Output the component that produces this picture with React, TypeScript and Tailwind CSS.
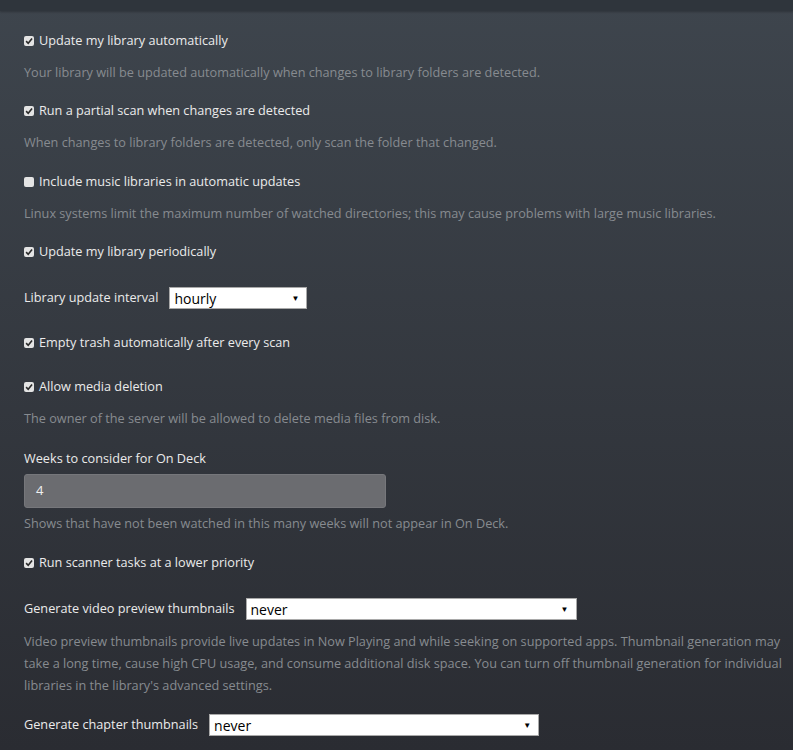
import React from 'react';

const Check = ({ checked }: { checked: boolean }) => (
  <span className="mr-[5px] inline-flex h-[10px] w-[10px] shrink-0 items-center justify-center rounded-[2px] bg-[#e4e4e4]">
    {checked && (
      <svg viewBox="0 0 10 10" className="h-[8px] w-[8px]">
        <path d="M1.4 5.2 L4 7.8 L8.8 2" fill="none" stroke="#2a2a2a" strokeWidth="2" />
      </svg>
    )}
  </span>
);

const CheckRow = ({ label, checked = true, className = '' }: { label: string; checked?: boolean; className?: string }) => (
  <div className={`flex h-[20px] items-center text-[12.7px] text-[#ebebeb] ${className}`}>
    <Check checked={checked} />
    <span>{label}</span>
  </div>
);

const Desc = ({ children, className = '' }: { children: React.ReactNode; className?: string }) => (
  <p className={`text-[12.7px] leading-[22px] text-[#878b90] ${className}`}>{children}</p>
);

const Select = ({ value, width }: { value: string; width: string }) => (
  <div className={`flex h-[22px] items-center justify-between border border-[#a9a9a9] bg-white pl-[4px] pr-[7px] text-[14px] text-black ${width}`}>
    <span>{value}</span>
    <span className="text-[8px] leading-none">▼</span>
  </div>
);

export default function App() {
  return (
    <div className="min-h-[750px] w-full bg-gradient-to-b from-[#3e454d] to-[#2a2c32] font-['Open_Sans',sans-serif]">
      <div className="h-[11px] bg-[#2f353c] shadow-[0_1px_2px_rgba(0,0,0,0.25)]" />
      <div className="pl-[24px] pr-[4px] pt-[20px]">
        <CheckRow label="Update my library automatically" />
        <Desc className="mt-[10px]">Your library will be updated automatically when changes to library folders are detected.</Desc>

        <CheckRow label="Run a partial scan when changes are detected" className="mt-[18px]" />
        <Desc className="mt-[10px]">When changes to library folders are detected, only scan the folder that changed.</Desc>

        <CheckRow label="Include music libraries in automatic updates" checked={false} className="mt-[19px]" />
        <Desc className="mt-[10px]">Linux systems limit the maximum number of watched directories; this may cause problems with large music libraries.</Desc>

        <CheckRow label="Update my library periodically" className="mt-[18px]" />

        <div className="mt-[25px] flex items-center text-[12.7px] text-[#ebebeb]">
          <span className="mr-[11px]">Library update interval</span>
          <Select value="hourly" width="w-[138px]" />
        </div>

        <CheckRow label="Empty trash automatically after every scan" className="mt-[24px]" />

        <CheckRow label="Allow media deletion" className="mt-[24px]" />
        <Desc className="mt-[10px]">The owner of the server will be allowed to delete media files from disk.</Desc>

        <div className="mt-[19px] h-[20px] text-[12.7px] leading-[20px] text-[#ebebeb]">Weeks to consider for On Deck</div>
        <div className="mt-[6px] flex h-[34px] w-[362px] items-center rounded-[3px] border border-[#76777b] bg-[#6b6c70] px-[11px] text-[13px] text-[#f0f0f0]">
          4
        </div>
        <Desc className="mt-[4px]">Shows that have not been watched in this many weeks will not appear in On Deck.</Desc>

        <CheckRow label="Run scanner tasks at a lower priority" className="mt-[19px]" />

        <div className="mt-[25px] flex items-center text-[12.7px] text-[#ebebeb]">
          <span className="mr-[11px]">Generate video preview thumbnails</span>
          <Select value="never" width="w-[331px]" />
        </div>
        <Desc className="mt-[10px]">
          Video preview thumbnails provide live updates in Now Playing and while seeking on supported apps. Thumbnail generation may take a long time, cause high CPU usage, and consume additional disk space. You can turn off thumbnail generation for individual libraries in the library's advanced settings.
        </Desc>

        <div className="mt-[18px] flex items-center text-[12.7px] text-[#ebebeb]">
          <span className="mr-[11px]">Generate chapter thumbnails</span>
          <Select value="never" width="w-[330px]" />
        </div>
      </div>
    </div>
  );
}
